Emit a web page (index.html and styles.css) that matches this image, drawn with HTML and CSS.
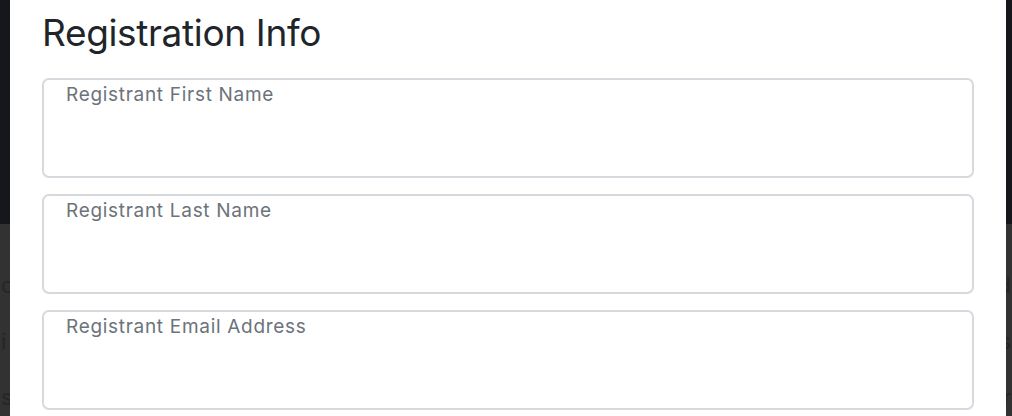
FILE: index.html
```html
<!DOCTYPE html>
<html>
<head>
<meta charset="utf-8">
<link rel="stylesheet" href="styles.css">
</head>
<body>
<div class="page">
  <div class="page-top"></div>
  <div class="page-bottom">
    <div class="ghost-row"><span class="ghost-l">o</span><span class="ghost-r">d</span></div>
    <div class="ghost-row"><span class="ghost-l">i</span><span class="ghost-r">s</span></div>
    <div class="ghost-row"><span class="ghost-l">s</span><span class="ghost-r">r</span></div>
  </div>
</div>
<div class="modal">
  <h2 class="title">Registration Info</h2>
  <div class="field"><label>Registrant First Name</label></div>
  <div class="field"><label>Registrant Last Name</label></div>
  <div class="field"><label>Registrant Email Address</label></div>
</div>
</body>
</html>
```
FILE: styles.css
```css
html, body {
  margin: 0;
  padding: 0;
  height: 100%;
  overflow: hidden;
}
body {
  font-family: Inter, "Noto Sans", sans-serif;
  background: #333333;
}
.page {
  display: flex;
  flex-direction: column;
  height: 416px;
}
.page-top {
  height: 224px;
  background: #15171c;
}
.page-bottom {
  flex: 1;
  background: #323232;
  padding-top: 44px;
  display: flex;
  flex-direction: column;
  gap: 22px;
}
.ghost-row {
  display: flex;
  justify-content: space-between;
  font-size: 22px;
  color: #262626;
  line-height: 34px;
  padding: 0 1px;
}
.modal {
  position: absolute;
  left: 10px;
  top: 0;
  width: 996px;
  height: 416px;
  background: #ffffff;
  box-sizing: border-box;
  padding: 10px 32px 0;
  display: flex;
  flex-direction: column;
  gap: 16px;
}
.title {
  margin: 0 0 6px;
  font-weight: 400;
  font-size: 37px;
  line-height: 46px;
  color: #212529;
  letter-spacing: -0.35px;
}
.field {
  height: 100px;
  flex: none;
  border: 2px solid #d6d9dd;
  border-radius: 7px;
  box-sizing: border-box;
  padding: 2px 22px;
}
.field label {
  font-size: 19px;
  line-height: 26px;
  color: #6c737a;
  letter-spacing: 0.7px;
}
```
